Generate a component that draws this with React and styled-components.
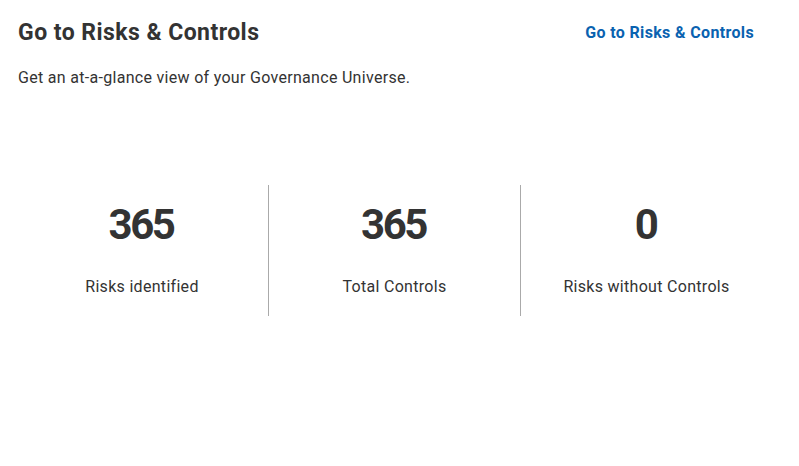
import React from 'react';
import styled, { createGlobalStyle } from 'styled-components';

const GlobalStyle = createGlobalStyle`
	body {
		margin: 0;
		background: #fff;
		font-family: Roboto, "Liberation Sans", sans-serif;
		color: #333;
	}
`;

const Card = styled.section`
	width: 799px;
	height: 466px;
	box-sizing: border-box;
	padding: 18px 45px 0 18px;
`;

const Header = styled.header`
	display: flex;
	align-items: center;
	justify-content: space-between;
	height: 28px;
`;

const Title = styled.h2`
	margin: 0;
	font-size: 23px;
	font-weight: 700;
	letter-spacing: 0.45px;
	color: #333;
`;

const Link = styled.a`
	font-size: 16px;
	font-weight: 700;
	letter-spacing: 0.35px;
	color: #0a62b0;
	text-decoration: none;
	cursor: pointer;
`;

const Description = styled.p`
	margin: 20px 0 0;
	font-size: 16px;
	line-height: 24px;
	letter-spacing: 0.3px;
	color: #333;
`;

const Stats = styled.div`
	display: grid;
	grid-template-columns: repeat(3, 252px);
	margin: 95px 0 0 -2px;
`;

const Stat = styled.div`
	display: flex;
	flex-direction: column;
	align-items: center;
	height: 131px;
	border-left: ${(p) => (p.divided ? '1px solid #aaa' : 'none')};
`;

const Value = styled.div`
	margin: 15px 0 0 -2px;
	font-size: 42px;
	font-weight: 700;
	line-height: 50px;
	letter-spacing: -2.5px;
	color: #333;
`;

const Label = styled.div`
	margin-top: 25px;
	font-size: 16px;
	line-height: 24px;
	letter-spacing: 0.3px;
	color: #333;
`;

const stats = [
	{ value: 365, label: 'Risks identified' },
	{ value: 365, label: 'Total Controls' },
	{ value: 0, label: 'Risks without Controls' }
];

export default function App() {
	return (
		<>
			<GlobalStyle />
			<Card>
				<Header>
					<Title>Go to Risks &amp; Controls</Title>
					<Link>Go to Risks &amp; Controls</Link>
				</Header>
				<Description>Get an at-a-glance view of your Governance Universe.</Description>
				<Stats>
					{stats.map((s, i) => (
						<Stat key={s.label} divided={i > 0}>
							<Value>{s.value}</Value>
							<Label>{s.label}</Label>
						</Stat>
					))}
				</Stats>
			</Card>
		</>
	);
}
